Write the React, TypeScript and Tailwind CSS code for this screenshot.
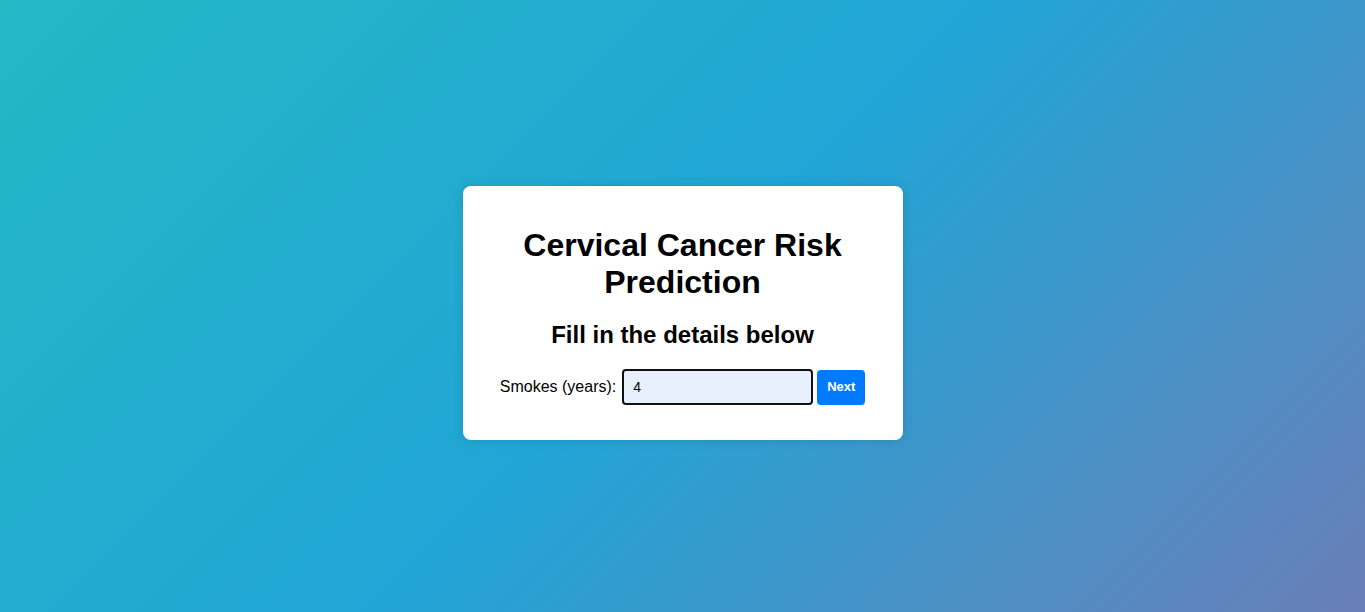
import { useState } from "react";

export default function App() {
  const [years, setYears] = useState("4");

  return (
    <div className="min-h-screen w-full flex items-center justify-center pt-[14px] bg-[linear-gradient(135deg,#24b8c4_0%,#21a5d6_50%,#6a7fb8_100%)] font-['Liberation_Sans',Arial,sans-serif]">
      <div className="w-[440px] bg-white rounded-lg shadow-[0_0_12px_rgba(0,0,0,0.12)] px-5 pt-[41px] pb-[35px] text-center text-black">
        <h1 className="text-[32px] leading-[37px] font-bold">Cervical Cancer Risk Prediction</h1>
        <h2 className="mt-[20px] text-[24px] leading-[28px] font-bold">Fill in the details below</h2>
        <form
          className="mt-5 flex items-center justify-center"
          onSubmit={(e) => e.preventDefault()}
        >
          <label htmlFor="smokes" className="text-base mr-[6px]">Smokes (years):</label>
          <input
            id="smokes"
            type="text"
            value={years}
            onChange={(e) => setYears(e.target.value)}
            className="w-[191px] h-[36px] px-[9px] border-2 border-[#111] rounded-[4px] bg-[#e8f0fe] text-[14px] outline-none"
          />
          <button
            type="submit"
            className="ml-[4px] w-[48px] h-[35px] rounded-[4px] bg-[#007bff] text-white text-[13px] font-bold"
          >
            Next
          </button>
        </form>
      </div>
    </div>
  );
}
